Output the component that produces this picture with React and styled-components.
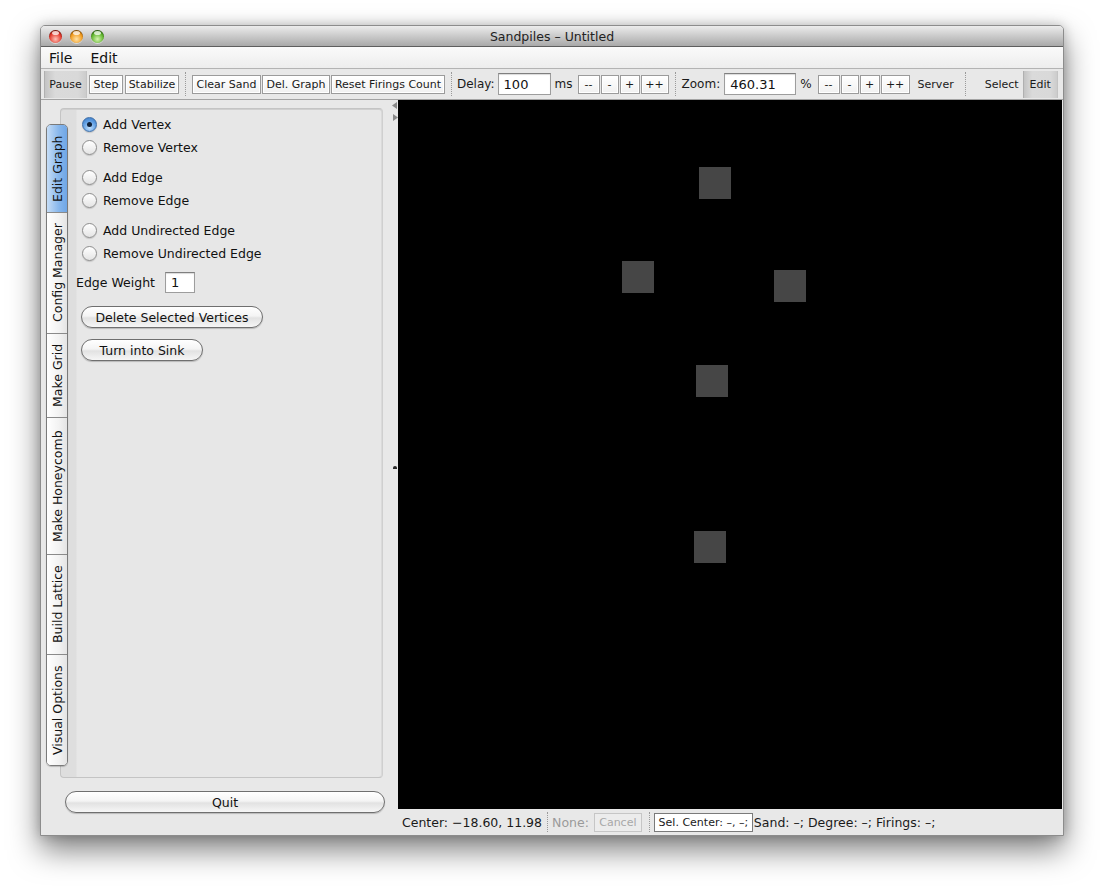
import React from "react";
import styled, { createGlobalStyle } from "styled-components";

const GlobalStyle = createGlobalStyle`
  html, body { margin: 0; padding: 0; background: #fff; }
  body { font-family: "DejaVu Sans", Verdana, sans-serif; color: #111; }
  * { box-sizing: border-box; }
`;

const Page = styled.div`
  width: 1104px;
  height: 892px;
  padding: 25px 0 0 40px;
`;

const Window = styled.div`
  width: 1024px;
  height: 811px;
  display: flex;
  flex-direction: column;
  background: #e8e8e8;
  border: 1px solid #8c8c8c;
  border-radius: 5px 5px 0 0;
  box-shadow: 0 14px 30px rgba(0, 0, 0, 0.5), 0 0 12px rgba(0, 0, 0, 0.2);
  overflow: hidden;
`;

const TitleBar = styled.div`
  height: 21px;
  flex: none;
  display: grid;
  grid-template-columns: 1fr auto 1fr;
  align-items: center;
  background: linear-gradient(#ececec, #a9a9a9);
  border-bottom: 1px solid #5e5e5e;
  font-size: 12.5px;
  color: #222;
`;

const Lights = styled.div`
  display: flex;
  gap: 8px;
  padding-left: 8px;
`;

const lightColors = {
  red: ["#ffc2b8", "#e3392c", "#8e1208"],
  orange: ["#ffe2a6", "#f19a1c", "#9a5200"],
  green: ["#d6f5b0", "#5fb52c", "#2a6a0c"],
};

const Light = styled.span`
  width: 13px;
  height: 13px;
  border-radius: 50%;
  background: ${(p) => {
    const c = lightColors[p.$c];
    return `radial-gradient(circle at 50% 70%, ${c[0]} 0%, ${c[1]} 55%, ${c[2]} 100%)`;
  }};
  box-shadow: inset 0 1px 1px rgba(0, 0, 0, 0.4), 0 1px 0 rgba(255, 255, 255, 0.5);
  position: relative;
  &::after {
    content: "";
    position: absolute;
    left: 3px;
    top: 1px;
    width: 7px;
    height: 4px;
    border-radius: 50%;
    background: rgba(255, 255, 255, 0.75);
  }
`;

const MenuBar = styled.div`
  height: 22px;
  flex: none;
  display: flex;
  align-items: center;
  padding-left: 8px;
  gap: 18px;
  background: linear-gradient(#fafafa, #ededed);
  border-bottom: 1px solid #b3b3b3;
  font-size: 14px;
`;

const Toolbar = styled.div`
  height: 31px;
  flex: none;
  display: flex;
  align-items: center;
  padding-left: 3px;
  background: #e8e8e8;
  border-bottom: 1px solid #a3a3a3;
  font-size: 11px;
  & > * { flex-shrink: 0; }
`;

const Group = styled.div`
  display: flex;
  align-items: center;
  gap: ${(p) => p.$gap ?? 2}px;
  margin-left: ${(p) => p.$ml ?? 0}px;
  & > * { flex-shrink: 0; }
`;

const TButton = styled.button`
  height: 19px;
  width: ${(p) => p.$w}px;
  padding: 0;
  font-family: inherit;
  font-size: 11px;
  color: #1a1a1a;
  background: linear-gradient(#ffffff, #f1f1f1);
  border: 1px solid #9b9b9b;
  box-shadow: inset 0 0 0 1px #fff;
  white-space: nowrap;
`;

const Pressed = styled.button`
  height: 27px;
  width: ${(p) => p.$w}px;
  padding: 0;
  font-family: inherit;
  font-size: 11px;
  color: #1a1a1a;
  background: linear-gradient(to right, #c4c4c4, #dadada 25%, #d9d9d9 80%, #cccccc);
  border: none;
  border-left: 1px solid #b0b0b0;
  border-right: 1px solid #c4c4c4;
`;

const Sep = styled.div`
  width: 0;
  height: 24px;
  flex-shrink: 0;
  border-left: 1px dotted #9a9a9a;
  margin: 0 ${(p) => p.$r ?? 6}px 0 ${(p) => p.$l ?? 6}px;
`;

const Label = styled.span`
  font-size: ${(p) => p.$size ?? 12}px;
  color: ${(p) => (p.$muted ? "#9a9a9a" : "#1a1a1a")};
  margin: 0 ${(p) => p.$r ?? 0}px 0 ${(p) => p.$l ?? 0}px;
  white-space: nowrap;
`;

const Field = styled.input`
  width: ${(p) => p.$w}px;
  height: ${(p) => p.$h ?? 22}px;
  margin-left: ${(p) => p.$ml ?? 0}px;
  font-family: inherit;
  font-size: 13px;
  padding: 0 0 0 ${(p) => p.$pad ?? 5}px;
  border: 1px solid #9d9d9d;
  border-top-color: #7f7f7f;
  background: #fff;
  box-shadow: inset 0 1px 1px rgba(0, 0, 0, 0.15);
  color: #111;
`;

const Body = styled.div`
  flex: 1;
  display: flex;
  min-height: 0;
`;

const LeftPanel = styled.div`
  width: 351px;
  flex: none;
  display: flex;
  flex-direction: column;
`;

const TabPane = styled.div`
  display: flex;
  padding: 8px 0 0 5px;
  height: 678px;
`;

const TabStrip = styled.div`
  width: 22px;
  margin: 16px -8px 0 0;
  position: relative;
  z-index: 1;
  display: flex;
  flex-direction: column;
  align-self: flex-start;
  border: 1px solid #7a7a7a;
  border-radius: 5px;
  overflow: hidden;
  box-shadow: 0 1px 1px rgba(0, 0, 0, 0.2);
`;

const Tab = styled.div`
  height: ${(p) => p.$h}px;
  display: flex;
  align-items: center;
  justify-content: center;
  writing-mode: vertical-rl;
  transform: rotate(180deg);
  font-size: 12.5px;
  color: #111;
  background: ${(p) =>
    p.$active
      ? "linear-gradient(to left, #c6ddf6, #86b6ec 60%, #6fa6e6)"
      : "linear-gradient(to left, #ffffff, #f2f2f2 60%, #e4e4e4)"};
  border-bottom: 1px solid #8a8a8a;
  &:first-child { border-bottom: none; }
`;

const TabContent = styled.div`
  width: 323px;
  height: 670px;
  border: 1px solid #c4c4c4;
  border-right-color: #cfcfcf;
  border-radius: 4px;
  background: linear-gradient(to right, #dedede 0, #dedede 15px, #e7e7e7 16px);
  box-shadow: inset 0 1px 0 #cfcfcf, inset -1px 0 0 #dadada;
  padding: 4px 0 0 15px;
  display: flex;
  flex-direction: column;
`;

const RadioGroup = styled.div`
  display: flex;
  flex-direction: column;
  margin: 0 0 7px 6px;
`;

const RadioRow = styled.label`
  height: 23px;
  display: flex;
  align-items: center;
  gap: 6px;
  font-size: 12.5px;
`;

const Radio = styled.span`
  width: 15px;
  height: 15px;
  border-radius: 50%;
  flex: none;
  display: flex;
  align-items: center;
  justify-content: center;
  border: 1px solid ${(p) => (p.$on ? "#3d6ea8" : "#8d8d8d")};
  background: ${(p) =>
    p.$on
      ? "radial-gradient(circle at 50% 75%, #bfe0ff, #5a9ae0 60%, #3c77c0)"
      : "linear-gradient(#ffffff, #e4e4e4)"};
  box-shadow: 0 1px 1px rgba(0, 0, 0, 0.15);
  &::after {
    content: "";
    width: 5px;
    height: 5px;
    border-radius: 50%;
    background: #10223a;
    display: ${(p) => (p.$on ? "block" : "none")};
  }
`;

const WeightRow = styled.div`
  display: flex;
  align-items: center;
  gap: 10px;
  font-size: 12.5px;
  margin: 0 0 13px 0;
`;

const PillButton = styled.button`
  width: ${(p) => p.$w}px;
  height: 22px;
  margin: 0 0 ${(p) => p.$mb ?? 0}px ${(p) => p.$ml ?? 5}px;
  padding: 0;
  font-family: inherit;
  font-size: 12.5px;
  color: #111;
  border: 1px solid #6f6f6f;
  border-radius: 11px;
  background: linear-gradient(#ffffff 0%, #f4f4f4 45%, #e2e2e2 55%, #f6f6f6 100%);
  box-shadow: 0 1px 1px rgba(0, 0, 0, 0.2);
`;

const QuitRow = styled.div`
  padding: 13px 0 0 24px;
`;

const Splitter = styled.div`
  width: 6px;
  flex: none;
  display: flex;
  flex-direction: column;
  align-items: center;
  padding-top: 2px;
  gap: 5px;
`;

const Grip = styled.div`
  margin-top: 340px;
  width: 4px;
  height: 3px;
  border-radius: 2px 2px 0 0;
  background: #2a2a2a;
`;

const RightColumn = styled.div`
  flex: 1;
  display: flex;
  flex-direction: column;
`;

const Canvas = styled.div`
  flex: 1;
  position: relative;
  background: #000;
  margin-right: 1px;
`;

const Node = styled.div`
  position: absolute;
  width: 32px;
  height: 32px;
  background: #464646;
`;

const StatusBar = styled.div`
  height: 26px;
  flex: none;
  display: flex;
  align-items: center;
  padding-left: 4px;
  font-size: 12.5px;
  & > * { flex-shrink: 0; }
`;

const SmallButton = styled.button`
  height: 19px;
  width: ${(p) => p.$w}px;
  padding: 0;
  font-family: inherit;
  font-size: 11px;
  color: ${(p) => (p.$disabled ? "#a8a8a8" : "#1a1a1a")};
  background: ${(p) => (p.$disabled ? "#ececec" : "#fff")};
  border: 1px solid ${(p) => (p.$disabled ? "#c6c6c6" : "#7a7a7a")};
  white-space: nowrap;
`;

const Arrow = ({ dir }) => (
  <svg width="6" height="7" viewBox="0 0 6 7">
    {dir === "left" ? (
      <polygon points="5,0 5,7 0,3.5" fill="#8a8a8a" />
    ) : (
      <polygon points="1,0 1,7 6,3.5" fill="#8a8a8a" />
    )}
  </svg>
);

const nodes = [
  [301, 67],
  [224, 161],
  [376, 170],
  [298, 265],
  [296, 431],
];

const tabs = [
  ["Edit Graph", 87, true],
  ["Config Manager", 121],
  ["Make Grid", 84],
  ["Make Honeycomb", 137],
  ["Build Lattice", 100],
  ["Visual Options", 111],
];

const radioGroups = [
  [["Add Vertex", true], ["Remove Vertex"]],
  [["Add Edge"], ["Remove Edge"]],
  [["Add Undirected Edge"], ["Remove Undirected Edge"]],
];

export default function App() {
  return (
    <Page>
      <GlobalStyle />
      <Window>
        <TitleBar>
          <Lights>
            <Light $c="red" />
            <Light $c="orange" />
            <Light $c="green" />
          </Lights>
          <span>Sandpiles – Untitled</span>
          <span />
        </TitleBar>
        <MenuBar>
          <span>File</span>
          <span>Edit</span>
        </MenuBar>
        <Toolbar>
          <Pressed $w={43}>Pause</Pressed>
          <Group $ml={2} $gap={2}>
            <TButton $w={34}>Step</TButton>
            <TButton $w={54}>Stabilize</TButton>
          </Group>
          <Sep $l={6} $r={6} />
          <Group $gap={1}>
            <TButton $w={69}>Clear Sand</TButton>
            <TButton $w={68}>Del. Graph</TButton>
            <TButton $w={114}>Reset Firings Count</TButton>
          </Group>
          <Sep $l={6} $r={5} />
          <Label>Delay:</Label>
          <Field $w={53} $ml={3} defaultValue="100" />
          <Label $l={4} $r={5}>ms</Label>
          <Group $gap={1}>
            <TButton $w={22}>--</TButton>
            <TButton $w={18}>-</TButton>
            <TButton $w={20}>+</TButton>
            <TButton $w={28}>++</TButton>
          </Group>
          <Sep $l={6} $r={6} />
          <Label>Zoom:</Label>
          <Field $w={72} $ml={4} defaultValue="460.31" />
          <Label $l={4} $r={6}>%</Label>
          <Group $gap={1}>
            <TButton $w={22}>--</TButton>
            <TButton $w={18}>-</TButton>
            <TButton $w={20}>+</TButton>
            <TButton $w={29}>++</TButton>
          </Group>
          <Label $size={11} $l={8}>Server</Label>
          <Sep $l={11} $r={19} />
          <Label $size={11} $r={4}>Select</Label>
          <Pressed $w={35}>Edit</Pressed>
        </Toolbar>
        <Body>
          <LeftPanel>
            <TabPane>
              <TabStrip>
                {tabs.map(([t, h, a]) => (
                  <Tab key={t} $h={h} $active={a}>
                    {t}
                  </Tab>
                ))}
              </TabStrip>
              <TabContent>
                {radioGroups.map((g, i) => (
                  <RadioGroup key={i}>
                    {g.map(([t, on]) => (
                      <RadioRow key={t}>
                        <Radio $on={on} />
                        {t}
                      </RadioRow>
                    ))}
                  </RadioGroup>
                ))}
                <WeightRow>
                  <span>Edge Weight</span>
                  <Field $w={30} $h={21} $pad={5} defaultValue="1" />
                </WeightRow>
                <PillButton $w={182} $mb={11}>Delete Selected Vertices</PillButton>
                <PillButton $w={122}>Turn into Sink</PillButton>
              </TabContent>
            </TabPane>
            <QuitRow>
              <PillButton $w={320} $ml={0}>Quit</PillButton>
            </QuitRow>
          </LeftPanel>
          <Splitter>
            <Arrow dir="left" />
            <Arrow dir="right" />
            <Grip />
          </Splitter>
          <RightColumn>
            <Canvas>
              {nodes.map(([x, y], i) => (
                <Node key={i} style={{ left: x, top: y }} />
              ))}
            </Canvas>
            <StatusBar>
              <Label $size={12.5}>Center: −18.60, 11.98</Label>
              <Sep $l={5} $r={4} style={{ height: 20 }} />
              <Label $size={12.5} $muted $r={5}>None:</Label>
              <SmallButton $w={48} $disabled>Cancel</SmallButton>
              <Sep $l={7} $r={4} style={{ height: 20 }} />
              <SmallButton $w={99}>Sel. Center: –, –;</SmallButton>
              <Label $size={12.5} $l={1}>Sand: –; Degree: –; Firings: –;</Label>
            </StatusBar>
          </RightColumn>
        </Body>
      </Window>
    </Page>
  );
}
